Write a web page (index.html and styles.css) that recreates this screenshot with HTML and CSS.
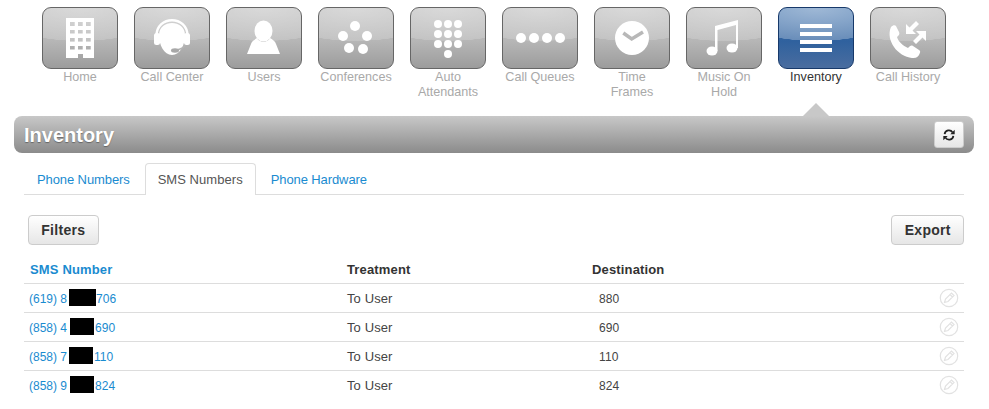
FILE: index.html
```html
<!DOCTYPE html>
<html lang="en">
<head>
<meta charset="utf-8">
<title>Inventory</title>
<link rel="stylesheet" href="styles.css">
</head>
<body>
<nav class="nav">
  <a class="nav-item"><span class="tile"><svg viewBox="0 0 74 60" class="ico"><path fill="#fff" fill-rule="evenodd" d="M23 10h28v40H40v-4h-5v4H23zM27 14v4h4.700v-4zM35 14v4h4.700v-4zM43 14v4h4.700v-4zM27 22v3.500h4.700V22zM35 22v3.500h4.700V22zM43 22v3.500h4.700V22zM27 30v3.500h4.700V30zM35 30v3.500h4.700V30zM43 30v3.500h4.700V30zM27 38v3.500h4.700V38zM35 38v3.500h4.700V38zM43 38v3.500h4.700V38z"/></svg></span><span class="label">Home</span></a>
  <a class="nav-item"><span class="tile"><svg viewBox="0 0 74 60" class="ico"><path fill="none" stroke="#fff" stroke-width="2.500" d="M21.500 28c0-21 31-21 31 0"/><rect x="19" y="25" width="6" height="12" rx="2.500" fill="#fff"/><rect x="49" y="25" width="6" height="12" rx="2.500" fill="#fff"/><path fill="#fff" d="M24 27c0-16 26-16 26 0 0 10-5 20-13 20s-13-10-13-20z"/><path fill="none" stroke="#b5b5b5" stroke-width="1.500" d="M50 37c-1 3-4 4-8 5"/><ellipse cx="40" cy="42.500" rx="4" ry="2.200" fill="#a8a8a8"/></svg></span><span class="label">Call Center</span></a>
  <a class="nav-item"><span class="tile"><svg viewBox="0 0 74 60" class="ico" fill="#fff"><ellipse cx="36.500" cy="23" rx="9" ry="10.500"/><path d="M20 46l4-10c1-3 3-4 6-6 2 5 11 5 13 0 3 2 5 3 6 6l4 10z"/></svg></span><span class="label">Users</span></a>
  <a class="nav-item"><span class="tile"><svg viewBox="0 0 74 60" class="ico" fill="#fff"><circle cx="36" cy="18" r="5"/><circle cx="24" cy="28" r="5"/><circle cx="48" cy="28" r="5"/><circle cx="30" cy="40" r="5"/><circle cx="44" cy="41" r="5"/></svg></span><span class="label">Conferences</span></a>
  <a class="nav-item"><span class="tile"><svg viewBox="0 0 74 60" class="ico" fill="#fff"><circle cx="27" cy="16" r="4"/><circle cx="37" cy="16" r="4"/><circle cx="47" cy="16" r="4"/><circle cx="27" cy="26" r="4"/><circle cx="37" cy="26" r="4"/><circle cx="47" cy="26" r="4"/><circle cx="27" cy="36" r="4"/><circle cx="37" cy="36" r="4"/><circle cx="47" cy="36" r="4"/><circle cx="37" cy="46" r="4"/></svg></span><span class="label">Auto Attendants</span></a>
  <a class="nav-item"><span class="tile"><svg viewBox="0 0 74 60" class="ico" fill="#fff"><circle cx="18" cy="30" r="5"/><circle cx="31" cy="30" r="5"/><circle cx="44" cy="30" r="5"/><circle cx="57" cy="30" r="5"/></svg></span><span class="label">Call Queues</span></a>
  <a class="nav-item"><span class="tile"><svg viewBox="0 0 74 60" class="ico"><circle cx="37" cy="30" r="17" fill="#fff"/><path fill="none" stroke="#b8b8b8" stroke-width="3.500" d="M28.300 25l8.400 6 11.300-7"/></svg></span><span class="label">Time<br>Frames</span></a>
  <a class="nav-item"><span class="tile"><svg viewBox="0 0 74 60" class="ico" fill="#fff"><path d="M28 18l23-6v28h-2V17l-18.500 5v21H28z"/><ellipse cx="25" cy="43" rx="5.500" ry="4.500"/><ellipse cx="45" cy="40" rx="5.500" ry="4.500"/></svg></span><span class="label">Music On Hold</span></a>
  <a class="nav-item active"><span class="tile"><svg viewBox="0 0 74 60" class="ico" fill="#fff"><rect x="21" y="16" width="32" height="4"/><rect x="21" y="24" width="32" height="4"/><rect x="21" y="32" width="32" height="4"/><rect x="21" y="40" width="32" height="4"/></svg></span><span class="label">Inventory</span></a>
  <a class="nav-item"><span class="tile"><svg viewBox="0 0 74 60" class="ico" fill="#fff"><path d="M20 19c2-2 4-2 5-1l3 6c1 2 0 3-2 5 1 4 6 9 11 11 2-2 3-3 5-2l6 4c2 1 1 3 0 5-2 3-4 3-7 3-7-1-14-5-18-11-4-6-6-13-3-20z"/><path d="M35 26V16l3.500 3.500 6.500-6.500 3 3-6.500 6.500L45 26z"/><path d="M55 23v10l-3.500-3.500L45 36l-3-3 6.500-6.500L45 23z"/></svg></span><span class="label">Call History</span></a>
</nav>
<header class="bar">
  <h1 class="bar-title">Inventory</h1>
  <button class="refresh" type="button" aria-label="Refresh"><svg viewBox="0 0 16 16" class="refresh-ico"><path fill="none" stroke="#222" stroke-width="2" d="M3 7c.6-5 7-5.500 9-2M13 9c-.6 5-7 5.500-9 2"/><path fill="#222" d="M14.500 2v5h-5zM1.500 14V9h5z"/></svg></button>
</header>
<main class="content">
  <ul class="tabs">
    <li class="tab"><a>Phone Numbers</a></li>
    <li class="tab current"><a>SMS Numbers</a></li>
    <li class="tab"><a>Phone Hardware</a></li>
  </ul>
  <div class="actions">
    <button class="btn" type="button">Filters</button>
    <button class="btn" type="button">Export</button>
  </div>
  <table class="grid">
    <thead>
      <tr><th class="c-num"><a>SMS Number</a></th><th class="c-tr">Treatment</th><th class="c-dest">Destination</th><th class="c-edit"></th></tr>
    </thead>
    <tbody>
      <tr><td class="num"><a>(619) 8<span class="redact r27"></span>706</a></td><td class="treat">To User</td><td class="dest">880</td><td class="edit"><svg viewBox="0 0 20 20" class="pen"><circle cx="10" cy="10" r="8.700"/><path d="M5.500 14.500l1-3.500 6-6 2.500 2.500-6 6zM11 6.500l2.500 2.500"/></svg></td></tr>
      <tr><td class="num"><a>(858) 4<span class="redact r24"></span>690</a></td><td class="treat">To User</td><td class="dest">690</td><td class="edit"><svg viewBox="0 0 20 20" class="pen"><circle cx="10" cy="10" r="8.700"/><path d="M5.500 14.500l1-3.500 6-6 2.500 2.500-6 6zM11 6.500l2.500 2.500"/></svg></td></tr>
      <tr><td class="num"><a>(858) 7<span class="redact r24 near"></span>110</a></td><td class="treat">To User</td><td class="dest">110</td><td class="edit"><svg viewBox="0 0 20 20" class="pen"><circle cx="10" cy="10" r="8.700"/><path d="M5.500 14.500l1-3.500 6-6 2.500 2.500-6 6zM11 6.500l2.500 2.500"/></svg></td></tr>
      <tr><td class="num"><a>(858) 9<span class="redact r24"></span>824</a></td><td class="treat">To User</td><td class="dest">824</td><td class="edit"><svg viewBox="0 0 20 20" class="pen"><circle cx="10" cy="10" r="8.700"/><path d="M5.500 14.500l1-3.500 6-6 2.500 2.500-6 6zM11 6.500l2.500 2.500"/></svg></td></tr>
    </tbody>
  </table>
</main>
</body>
</html>
```

FILE: styles.css
```css
* { box-sizing: border-box; }
html, body { height: 100%; }
body {
  margin: 0;
  background: #fff;
  font-family: "Liberation Sans", Arial, sans-serif;
  font-size: 12px;
  color: #333;
  overflow: hidden;
}
a { color: inherit; text-decoration: none; }

.nav {
  display: flex;
  height: 103px;
  padding: 7px 0 0 34px;
}
.nav-item {
  width: 92px;
  display: flex;
  flex-direction: column;
  align-items: center;
}
.tile {
  display: block;
  width: 76px;
  height: 62px;
  border: 1px solid #666;
  border-radius: 9px;
  background:
    radial-gradient(ellipse 90px 33px at 50% 0, rgba(255,255,255,.4) 0, rgba(255,255,255,.18) 99%, rgba(255,255,255,0) 100%),
    linear-gradient(#c0c0c0, #b6b6b6 55%, #9c9c9c);
  overflow: hidden;
}
.ico { display: block; width: 74px; height: 60px; }
.label {
  width: 76px;
  margin-top: 1px;
  text-align: center;
  font-size: 12.600px;
  line-height: 15px;
  color: #a9a9a9;
}
.active .tile {
  border-color: #17396a;
  background:
    radial-gradient(ellipse 90px 33px at 50% 0, rgba(255,255,255,.5) 0, rgba(255,255,255,.28) 99%, rgba(255,255,255,0) 100%),
    linear-gradient(#3f72ad, #2f619e 55%, #4a6d9f);
}
.active .label { color: #333; }

.bar {
  position: relative;
  margin: 13px 15px 0 14px;
  height: 37px;
  display: flex;
  align-items: center;
  justify-content: space-between;
  padding: 0 10px;
  border-radius: 8px;
  background: linear-gradient(#c8c8c8, #8b8b8b);
}
.bar::before {
  content: "";
  position: absolute;
  left: 789px;
  top: -13px;
  border-style: solid;
  border-width: 0 13px 13px;
  border-color: transparent transparent #c8c8c8;
}
.bar-title {
  margin: 0;
  padding-top: 2px;
  font-size: 20px;
  font-weight: bold;
  color: #fff;
  text-shadow: 0 1px 1px rgba(0,0,0,.35);
}
.refresh {
  width: 30px;
  height: 27px;
  padding: 0;
  display: flex;
  align-items: center;
  justify-content: center;
  border: 1px solid #ccc;
  border-radius: 3px;
  background: linear-gradient(#fff, #e6e6e6);
}
.refresh-ico { width: 14px; height: 14px; }

.content { padding: 10px 25px 0 24px; }
.tabs {
  list-style: none;
  margin: 0;
  padding: 0;
  height: 32px;
  display: flex;
  gap: 2px;
  border-bottom: 1px solid #ddd;
}
.tab {
  height: 32px;
  padding: 0 12px;
  line-height: 31px;
  font-size: 13px;
  letter-spacing: -.1px;
  color: #1a8bd0;
  border: 1px solid transparent;
  border-bottom: 0;
}
.tab.current {
  letter-spacing: .05px;
  color: #555;
  background: #fff;
  border-color: #ddd;
  border-radius: 4px 4px 0 0;
}

.actions {
  display: flex;
  justify-content: space-between;
  padding: 20px 0 0 4px;
}
.btn {
  height: 30px;
  padding: 0 12.200px;
  font: bold 14px "Liberation Sans", Arial, sans-serif;
  letter-spacing: .3px;
  color: #333;
  border: 1px solid #ccc;
  border-radius: 4px;
  background: linear-gradient(#fff, #e6e6e6);
}

.grid {
  width: 100%;
  margin-top: 9px;
  border-collapse: collapse;
  table-layout: fixed;
}
.grid th {
  height: 29px;
  padding: 2px 0 0;
  text-align: left;
  font-size: 13px;
  letter-spacing: .15px;
  font-weight: bold;
  color: #333;
  border-bottom: 1px solid #ddd;
}
.grid td {
  height: 29px;
  padding: 2px 0 0;
  border-bottom: 1px solid #ddd;
  color: #444;
}
.grid tr:last-child td { border-bottom: 0; }
.c-num { width: 323px; }
.c-tr { width: 245px; }
.c-edit { width: 40px; }
.c-num a { color: #1a8bd0; padding-left: 6px; }
.grid .num { padding-left: 5px; color: #1a8bd0; }
.grid .dest { padding-left: 7px; letter-spacing: .1px; }
.grid .treat { font-size: 13px; letter-spacing: .1px; }
.grid .edit { padding-top: 0; text-align: right; }
.pen {
  width: 20px;
  height: 20px;
  margin-right: 5px;
  vertical-align: middle;
  fill: none;
  stroke: #e2e2e2;
  stroke-width: 1.200;
}
.redact {
  display: inline-block;
  height: 17px;
  margin: -4px 1px -4px 3px;
  vertical-align: 1px;
  background: #000;
}
.r27 { width: 27px; margin-left: 2px; margin-right: 0; }
.r24 { width: 24px; }
.near { margin-left: 2px; }
```
